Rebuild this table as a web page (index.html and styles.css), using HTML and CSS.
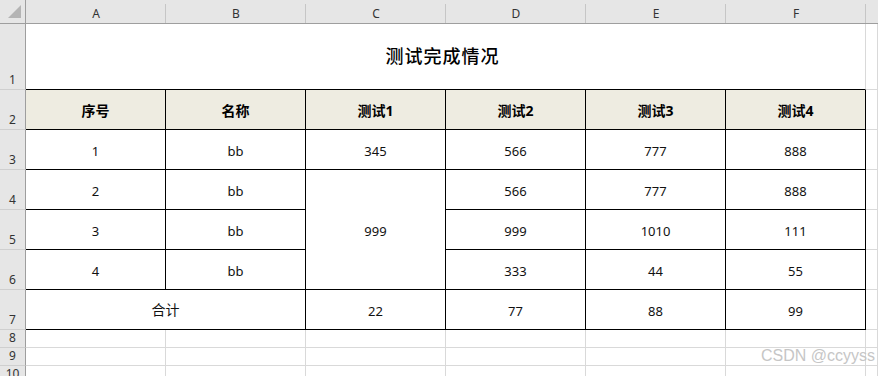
FILE: index.html
```html
<!DOCTYPE html>
<html lang="zh-CN">
<head>
<meta charset="utf-8">
<title>测试完成情况</title>
<link rel="stylesheet" href="styles.css">
</head>
<body>
<div class="sheet">
  <div class="corner"><svg class="tri" width="14" height="14" viewBox="0 0 14 14"><polygon points="13,0 13,13 0,13" fill="#b4b4b4"/></svg></div>
  <div class="colh">A</div>
  <div class="colh">B</div>
  <div class="colh">C</div>
  <div class="colh">D</div>
  <div class="colh">E</div>
  <div class="colh">F</div>
  <div class="colh colh-last"></div>

  <div class="rowh">1</div>
  <div class="c title">测试完成情况</div>
  <div class="c"></div>

  <div class="rowh">2</div>
  <div class="c t hd">序号</div>
  <div class="c t hd">名称</div>
  <div class="c t hd">测试1</div>
  <div class="c t hd">测试2</div>
  <div class="c t hd">测试3</div>
  <div class="c t hd">测试4</div>
  <div class="c"></div>

  <div class="rowh">3</div>
  <div class="c t">1</div>
  <div class="c t">bb</div>
  <div class="c t">345</div>
  <div class="c t">566</div>
  <div class="c t">777</div>
  <div class="c t">888</div>
  <div class="c"></div>

  <div class="rowh">4</div>
  <div class="c t">2</div>
  <div class="c t">bb</div>
  <div class="c t merge-v">999</div>
  <div class="c t">566</div>
  <div class="c t">777</div>
  <div class="c t">888</div>
  <div class="c"></div>

  <div class="rowh">5</div>
  <div class="c t">3</div>
  <div class="c t">bb</div>
  <div class="c t">999</div>
  <div class="c t">1010</div>
  <div class="c t">111</div>
  <div class="c"></div>

  <div class="rowh">6</div>
  <div class="c t">4</div>
  <div class="c t">bb</div>
  <div class="c t">333</div>
  <div class="c t">44</div>
  <div class="c t">55</div>
  <div class="c"></div>

  <div class="rowh">7</div>
  <div class="c t merge-h zh">合计</div>
  <div class="c t">22</div>
  <div class="c t">77</div>
  <div class="c t">88</div>
  <div class="c t">99</div>
  <div class="c"></div>

  <div class="rowh">8</div>
  <div class="c"></div><div class="c"></div><div class="c"></div><div class="c"></div><div class="c"></div><div class="c"></div><div class="c"></div>

  <div class="rowh">9</div>
  <div class="c"></div><div class="c"></div><div class="c"></div><div class="c"></div><div class="c"></div><div class="c"></div><div class="c"></div>

  <div class="rowh">10</div>
  <div class="c"></div><div class="c"></div><div class="c"></div><div class="c"></div><div class="c"></div><div class="c"></div><div class="c"></div>
</div>
<div class="watermark">CSDN @ccyyss</div>
</body>
</html>
```
FILE: styles.css
```css
html, body {
  margin: 0;
  padding: 0;
  height: 100%;
  overflow: hidden;
  background: #fff;
}

body {
  position: relative;
}

.sheet {
  display: grid;
  grid-template-columns: 26px repeat(6, 140px) 12px;
  grid-template-rows: 24px 66px repeat(6, 40px) 18px 18px 18px;
  font-family: "Noto Sans", "Noto Sans CJK SC", sans-serif;
  font-size: 13px;
  color: #111;
}

.corner {
  box-sizing: border-box;
  background: #e6e6e6;
  border-right: 1px solid #9e9e9e;
  border-bottom: 1px solid #9e9e9e;
  display: flex;
  align-items: flex-end;
  justify-content: flex-end;
  padding: 0 3px 4px 0;
}

.tri {
  display: block;
}

.colh {
  box-sizing: border-box;
  background-color: #e6e6e6;
  background-image: linear-gradient(#c6c6c6, #c6c6c6);
  background-repeat: no-repeat;
  background-position: right 0 top 4px;
  background-size: 1px 19px;
  border-bottom: 1px solid #9e9e9e;
  display: flex;
  align-items: center;
  justify-content: center;
  padding-top: 4px;
  font-size: 12px;
  color: #333;
}

.colh-last {
  background-image: none;
}

.rowh {
  box-sizing: border-box;
  background: #e6e6e6;
  border-right: 1px solid #9e9e9e;
  border-bottom: 1px solid #cfcfcf;
  display: flex;
  align-items: flex-end;
  justify-content: center;
  font-size: 12px;
  line-height: 14px;
  padding-bottom: 2px;
  color: #333;
}

.c {
  box-sizing: border-box;
  border-right: 1px solid #d9d9d9;
  border-bottom: 1px solid #d9d9d9;
  display: flex;
  align-items: center;
  justify-content: center;
  padding-top: 2px;
}

.t {
  border-right-color: #000;
  border-bottom-color: #000;
}

.title {
  grid-column: span 6;
  border-bottom-color: #000;
  font-family: "Noto Sans CJK SC", sans-serif;
  font-size: 18px;
  font-weight: 500;
  letter-spacing: 1px;
  color: #000;
  padding: 0 6px 4px 0;
}

.hd {
  background: #eeece1;
  font-weight: 700;
  font-size: 14px;
  color: #000;
  padding-top: 0;
}

.merge-v {
  grid-row: span 3;
}

.merge-h {
  grid-column: span 2;
}

.zh {
  font-family: "Noto Sans CJK SC", sans-serif;
  font-size: 14px;
  padding-top: 0;
  padding-bottom: 2px;
}

.watermark {
  position: absolute;
  right: 3px;
  top: 347px;
  font-family: "Liberation Sans", Arial, sans-serif;
  font-size: 16px;
  color: #c6c6c6;
  white-space: nowrap;
}
```
